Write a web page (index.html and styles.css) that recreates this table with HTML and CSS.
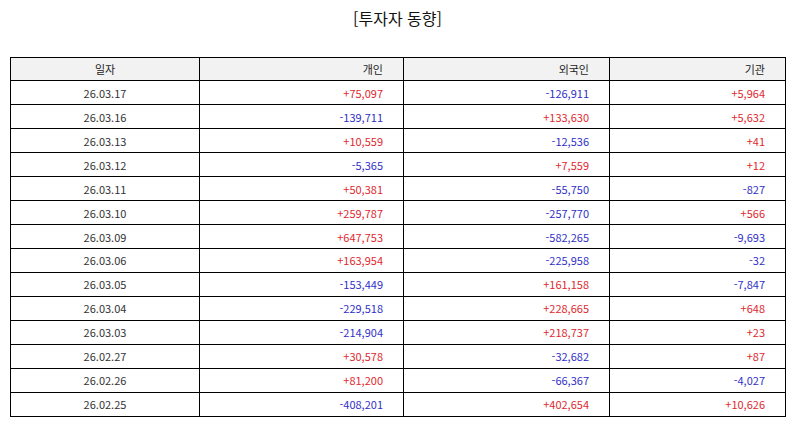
FILE: index.html
```html
<!DOCTYPE html>
<html lang="ko">
<head>
<meta charset="utf-8">
<title>투자자 동향</title>
<link rel="stylesheet" href="styles.css">
</head>
<body>
<div class="page">
  <h1 class="title">[투자자 동향]</h1>
  <table class="grid">
    <colgroup>
      <col class="c-date">
      <col class="c-ind">
      <col class="c-for">
      <col class="c-inst">
    </colgroup>
    <thead>
      <tr><th class="center">일자</th><th>개인</th><th>외국인</th><th>기관</th></tr>
    </thead>
    <tbody>
      <tr><td class="center">26.03.17</td><td class="up">+75,097</td><td class="down">-126,911</td><td class="up">+5,964</td></tr>
      <tr><td class="center">26.03.16</td><td class="down">-139,711</td><td class="up">+133,630</td><td class="up">+5,632</td></tr>
      <tr><td class="center">26.03.13</td><td class="up">+10,559</td><td class="down">-12,536</td><td class="up">+41</td></tr>
      <tr><td class="center">26.03.12</td><td class="down">-5,365</td><td class="up">+7,559</td><td class="up">+12</td></tr>
      <tr><td class="center">26.03.11</td><td class="up">+50,381</td><td class="down">-55,750</td><td class="down">-827</td></tr>
      <tr><td class="center">26.03.10</td><td class="up">+259,787</td><td class="down">-257,770</td><td class="up">+566</td></tr>
      <tr><td class="center">26.03.09</td><td class="up">+647,753</td><td class="down">-582,265</td><td class="down">-9,693</td></tr>
      <tr><td class="center">26.03.06</td><td class="up">+163,954</td><td class="down">-225,958</td><td class="down">-32</td></tr>
      <tr><td class="center">26.03.05</td><td class="down">-153,449</td><td class="up">+161,158</td><td class="down">-7,847</td></tr>
      <tr><td class="center">26.03.04</td><td class="down">-229,518</td><td class="up">+228,665</td><td class="up">+648</td></tr>
      <tr><td class="center">26.03.03</td><td class="down">-214,904</td><td class="up">+218,737</td><td class="up">+23</td></tr>
      <tr><td class="center">26.02.27</td><td class="up">+30,578</td><td class="down">-32,682</td><td class="up">+87</td></tr>
      <tr><td class="center">26.02.26</td><td class="up">+81,200</td><td class="down">-66,367</td><td class="down">-4,027</td></tr>
      <tr><td class="center">26.02.25</td><td class="down">-408,201</td><td class="up">+402,654</td><td class="up">+10,626</td></tr>
    </tbody>
  </table>
</div>
</body>
</html>
```

FILE: styles.css
```css
html, body {
  margin: 0;
  padding: 0;
  background: #ffffff;
}

.page {
  padding: 0 9px 0 10px;
  font-family: "Noto Sans CJK KR", "Noto Sans", sans-serif;
  color: #222222;
}

.title {
  margin: 0;
  padding-top: 7px;
  height: 50px;
  box-sizing: border-box;
  text-align: center;
  font-size: 16px;
  font-weight: normal;
  line-height: 22px;
  color: #111111;
}

.grid {
  width: 775px;
  border-collapse: collapse;
  table-layout: fixed;
  font-size: 11px;
  margin-top: 6.5px;
}

.c-date { width: 189px; }
.c-ind { width: 204px; }
.c-for { width: 206px; }
.c-inst { width: 176px; }

.grid th,
.grid td {
  border: 1.5px solid #000000;
  height: 22.95px;
  padding: 0 20px 0 0;
  text-align: right;
  vertical-align: middle;
  font-weight: normal;
  line-height: 14px;
  white-space: nowrap;
}

.grid th {
  background: #f2f2f2;
  color: #222222;
}

.grid td { color: #333333; }

.grid .center {
  text-align: center;
  padding: 0;
}

.grid td.up { color: #e0282e; }
.grid td.down { color: #3030c8; }
```
